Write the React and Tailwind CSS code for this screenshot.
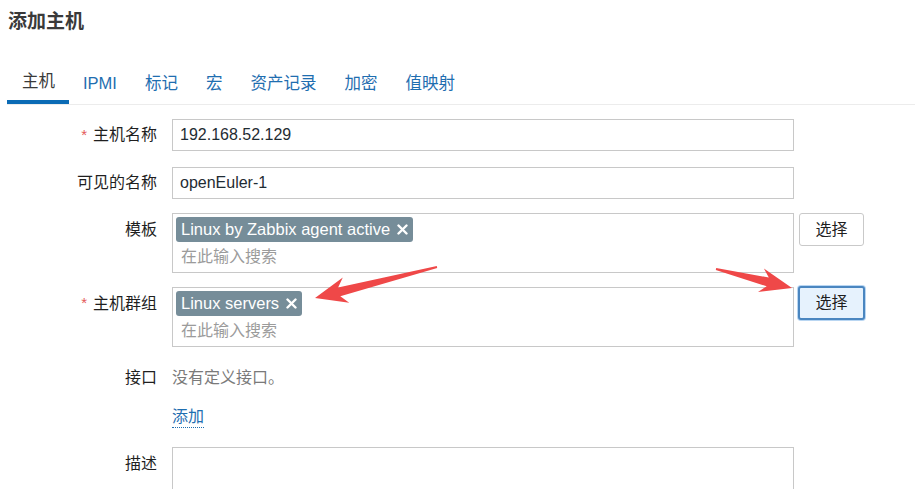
import React from 'react';

const tabs = ['主机', 'IPMI', '标记', '宏', '资产记录', '加密', '值映射'];

// build a tapered arrow polygon from tail to tip
const arrowPoints = (tx, ty, hx, hy, headLen, headHalf, shaftHead, shaftTail) => {
  const dx = hx - tx;
  const dy = hy - ty;
  const len = Math.hypot(dx, dy);
  const ux = dx / len;
  const uy = dy / len;
  const nx = -uy;
  const ny = ux;
  const bx = hx - ux * headLen;
  const by = hy - uy * headLen;
  const jx = bx + ux * 7;
  const jy = by + uy * 7;
  const pts = [
    [tx + nx * shaftTail, ty + ny * shaftTail],
    [jx + nx * shaftHead, jy + ny * shaftHead],
    [bx + nx * headHalf, by + ny * headHalf],
    [hx, hy],
    [bx - nx * headHalf, by - ny * headHalf],
    [jx - nx * shaftHead, jy - ny * shaftHead],
    [tx - nx * shaftTail, ty - ny * shaftTail],
  ];
  return pts.map((p) => p.map((v) => v.toFixed(1)).join(',')).join(' ');
};

const Label = ({ required, children, className = '' }) => (
  <div className={`w-[157px] shrink-0 flex items-center justify-end text-[16px] text-[#1f1f1f] ${className}`}>
    {required && <span className="text-[#e45959] mr-[6px] text-[15px]">*</span>}
    {children}
  </div>
);

const CloseX = () => (
  <svg width="11" height="11" viewBox="0 0 11 11" className="ml-[7px]">
    <path d="M1.5 1.5 L9.5 9.5 M9.5 1.5 L1.5 9.5" stroke="#fff" strokeWidth="2.4" strokeLinecap="round" />
  </svg>
);

const Tag = ({ children }) => (
  <span className="inline-flex items-center h-[25px] px-[5px] rounded-[3px] bg-[#768d99] text-white text-[16.5px]">
    {children}
    <CloseX />
  </span>
);

const MultiSelect = ({ tag }) => (
  <div className="w-[622px] h-[60px] border border-[#c8c8c8] pt-[3px] px-[3px]">
    <Tag>{tag}</Tag>
    <div className="mt-[2px] pl-[5px] leading-[26px] text-[16px] text-[#9b9b9b]">在此输入搜索</div>
  </div>
);

export default function App() {
  return (
    <div className="relative w-[915px] h-[489px] overflow-hidden bg-white font-['Liberation_Sans','Noto_Sans_CJK_SC',sans-serif]">
      <h1 className="pl-[8px] pt-[10px] text-[19px] leading-[24px] font-bold text-[#3a3a3a]">添加主机</h1>

      <div className="mt-[32px] ml-[7px] flex border-b border-[#ececec]">
        {tabs.map((t, i) => (
          <div
            key={t}
            className={`h-[38px] px-[14px] flex items-center pb-[3px] text-[16.5px] ${
              i === 0 ? 'border-b-[4px] border-[#0b6bb5] text-[#3a3a3a] pb-0 -mb-px pl-[15px]' : 'text-[#1f6eb0]'
            }`}
          >
            {t}
          </div>
        ))}
      </div>

      <div className="mt-[14px] flex flex-col">
        <div className="flex h-[32px]">
          <Label required>主机名称</Label>
          <div className="ml-[15px] w-[622px] border border-[#c8c8c8] flex items-center pl-[7px] text-[16px] text-[#1f2c33]">
            192.168.52.129
          </div>
        </div>

        <div className="flex h-[32px] mt-[16px]">
          <Label>可见的名称</Label>
          <div className="ml-[15px] w-[622px] border border-[#c8c8c8] flex items-center pl-[7px] text-[16px] text-[#1f2c33]">
            openEuler-1
          </div>
        </div>

        <div className="flex items-start mt-[14px]">
          <Label className="h-[34px]">模板</Label>
          <div className="ml-[15px]">
            <MultiSelect tag="Linux by Zabbix agent active" />
          </div>
          <button className="ml-[5px] w-[65px] h-[33px] border border-[#c9c9c9] rounded-[3px] bg-white text-[16px] text-[#1f1f1f]">
            选择
          </button>
        </div>

        <div className="flex items-start mt-[14px]">
          <Label required className="h-[33px]">主机群组</Label>
          <div className="ml-[15px]">
            <MultiSelect tag="Linux servers" />
          </div>
          <button className="ml-[4px] -mt-[1px] w-[67px] h-[34px] border-[2px] border-[#4a86c0] rounded-[3px] bg-[#e6f2fd] text-[16px] text-[#1f1f1f] shadow-[0_0_0_1px_#b9d6f2]">
            选择
          </button>
        </div>

        <div className="flex h-[22px] mt-[20px]">
          <Label>接口</Label>
          <div className="ml-[15px] flex items-center text-[16px] text-[#7a7a7a]">没有定义接口。</div>
        </div>

        <div className="flex mt-[18px]">
          <div className="w-[157px] shrink-0" />
          <span className="ml-[15px] leading-[20px] text-[16px] text-[#1f6eb0] border-b border-dotted border-[#1f6eb0]">
            添加
          </span>
        </div>

        <div className="flex items-start mt-[19px]">
          <Label className="h-[33px]">描述</Label>
          <div className="ml-[15px] w-[622px] h-[70px] border border-[#c8c8c8]" />
        </div>
      </div>

      <svg className="absolute inset-0 pointer-events-none" width="915" height="489">
        <polygon points={arrowPoints(437, 267, 315, 298, 32, 13, 4.5, 1)} fill="#ef4848" />
        <polygon points={arrowPoints(716, 269, 792, 288, 32, 12, 4.5, 1)} fill="#ef4848" />
      </svg>
    </div>
  );
}
